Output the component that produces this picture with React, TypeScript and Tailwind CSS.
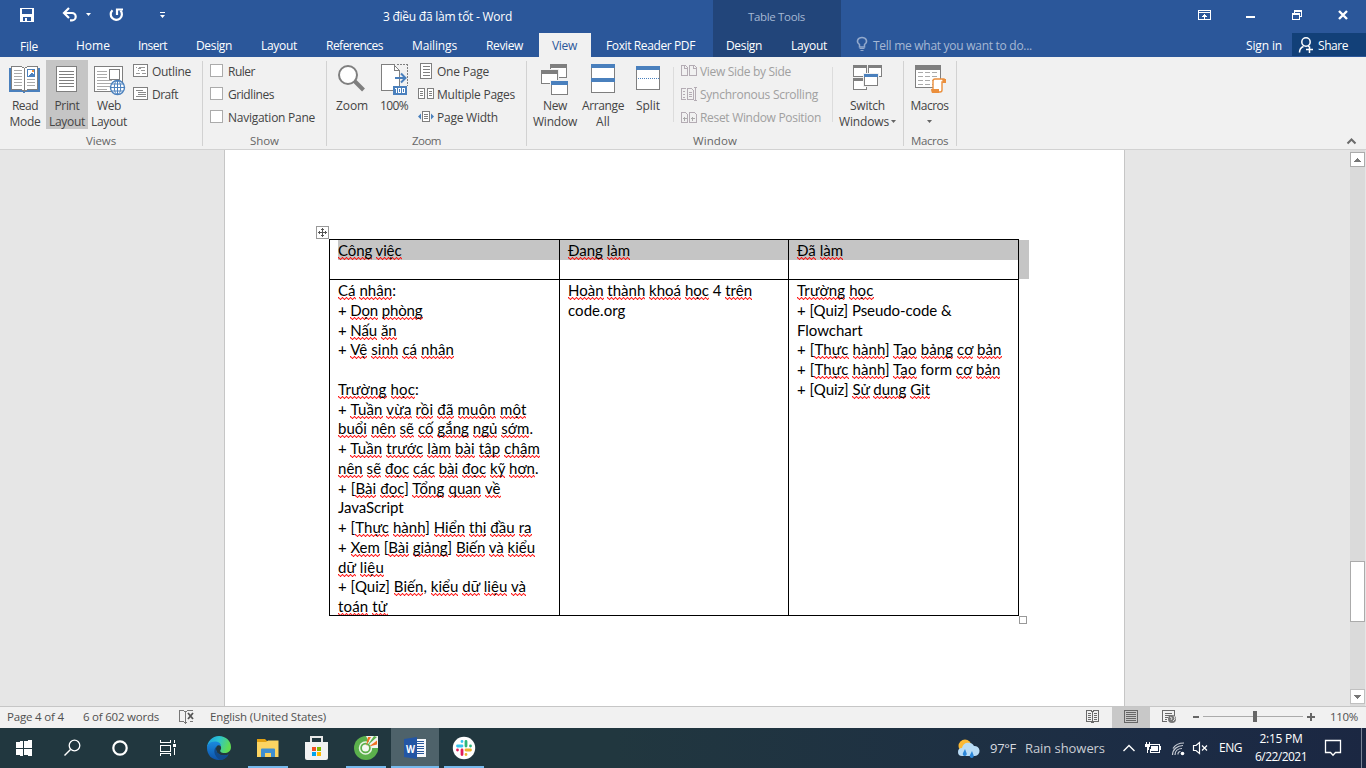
import { useLayoutEffect, useRef, type ReactNode } from "react";

/* Text that spreads its letters to fill its box exactly. */
function Fit({ w, className = "", children }: { w?: number; className?: string; children: ReactNode }) {
  const box = useRef<HTMLSpanElement>(null);
  const inner = useRef<HTMLSpanElement>(null);
  useLayoutEffect(() => {
    const b = box.current;
    const i = inner.current;
    if (!b || !i) return;
    const target = w ?? b.clientWidth;
    i.style.letterSpacing = "0px";
    const n = (i.textContent ?? "").length;
    const natural = i.getBoundingClientRect().width;
    if (n > 0 && target > 0) i.style.letterSpacing = `${(target - natural) / n}px`;
  });
  return (
    <span ref={box} className={`block shrink-0 whitespace-nowrap ${className}`}>
      <span ref={inner} className="inline-block">
        {children}
      </span>
    </span>
  );
}

/* SVG drawing whose coordinates are window coordinates. */
function Ico({ x, y, w, h, soft, className = "", children }: { x: number; y: number; w: number; h: number; soft?: boolean; className?: string; children: ReactNode }) {
  return (
    <svg width={w} height={h} viewBox={`${x} ${y} ${w} ${h}`} shapeRendering={soft ? "auto" : "crispEdges"} className={`block shrink-0 ${className}`} fill="none">
      {children}
    </svg>
  );
}

const G = "#7f7f7f";
const B = "#4a80bd";

/* ---------- Title bar and tabs ---------- */

function TitleBar() {
  return (
    <div className="flex h-[33px] shrink-0 text-white">
      <Ico x={0} y={0} w={180} h={33} soft>
        <path shapeRendering="crispEdges" fillRule="evenodd" fill="#fff" d="M20 8h14v14H20zM22 9v5h10V9zM23 17v4h2v-3h2v3h4v-4z" />
        <path d="M64 13h8a3.700 3.700 0 0 1 0 7.400H70" stroke="#fff" strokeWidth="2.200" />
        <path d="M69 8l-5 5 5 5" stroke="#fff" strokeWidth="2.200" />
        <path d="M86 13h5l-2.500 3z" fill="#fff" />
        <path d="M112.500 10.200a5.600 5.600 0 1 0 8 0.400" stroke="#fff" strokeWidth="2.200" />
        <path d="M117 15V9.500h6" stroke="#fff" strokeWidth="2.200" />
        <path d="M160 12h5v1h-5zM160 15h5l-2.500 3z" fill="#fff" />
      </Ico>
      <Fit className="ml-[203px] mt-px w-[129px] text-[12px] leading-[32px]">3 điều đã làm tốt - Word</Fit>
      <div className="ml-[201px] w-[128px] bg-[#22457a]">
        <Fit className="ml-[35px] mt-px w-[57px] text-[11.500px] leading-[32px] text-[#a6b8d4]">Table Tools</Fit>
      </div>
      <Ico x={1190} y={0} w={176} h={33} className="ml-auto">
        <path d="M1198.500 10.500h12v9h-12zM1198 12.500h13M1204.500 14v5M1202 16.500h5M1203 15.500h3" stroke="#fff" />
        <path d="M1246 16h9v2h-9z" fill="#fff" />
        <path d="M1292.500 13.500h7v6h-7zM1292 14.500h8M1294.500 13v-2.500h7v6h-2M1294 11.500h8" stroke="#fff" />
        <path d="M1339 11l8 8M1347 11l-8 8" stroke="#fff" strokeWidth="2.400" shapeRendering="auto" />
      </Ico>
    </div>
  );
}

function Tabs() {
  return (
    <div className="flex h-6 shrink-0 text-[12px] leading-[25px] text-white">
      <Fit className="ml-5 mt-px w-[18px]">File</Fit>
      <Fit className="ml-[38px] w-[34px]">Home</Fit>
      <Fit className="ml-[28px] w-[29px]">Insert</Fit>
      <Fit className="ml-[29px] w-[36px]">Design</Fit>
      <Fit className="ml-[29px] w-[36px]">Layout</Fit>
      <Fit className="ml-[29px] w-[57px]">References</Fit>
      <Fit className="ml-[29px] w-[45px]">Mailings</Fit>
      <Fit className="ml-[29px] w-[37px]">Review</Fit>
      <div className="ml-4 h-6 w-[52px] bg-[#f1f1f1] text-[#2b579a]">
        <Fit className="ml-[13px] w-[25px]">View</Fit>
      </div>
      <Fit className="ml-[15px] w-[89px]">Foxit Reader PDF</Fit>
      <div className="ml-[18px] flex h-6 w-[128px] bg-[#22457a]">
        <Fit className="ml-[13px] w-[36px]">Design</Fit>
        <Fit className="ml-[29px] w-[36px]">Layout</Fit>
      </div>
      <Ico x={855} y={33} w={14} h={24} soft className="ml-[14px]">
        <path d="M859.500 47v-2.500c-4-3-1.500-7 2.500-7s6.500 4 2.500 7V47z" stroke="#93a9cc" strokeWidth="1.500" />
        <path d="M859.500 48.500h5M860.500 50.500h3" stroke="#93a9cc" />
      </Ico>
      <Fit className="ml-[4px] w-[159px] text-[#a6b8d4]">Tell me what you want to do...</Fit>
      <Fit className="ml-[214px] w-[36px]">Sign in</Fit>
      <div className="ml-[10px] flex h-[23px] flex-1 bg-[#124078]">
        <Ico x={1297} y={33} w={19} h={23} soft className="ml-[5px]">
          <circle cx="1306" cy="42" r="4.200" stroke="#fff" strokeWidth="1.500" />
          <path d="M1299.500 52.500c0-3 1.500-5 4-6M1308 46l1.500 1M1309.500 46.500v6.500M1306 49.500h7" stroke="#fff" strokeWidth="1.500" />
        </Ico>
        <Fit className="ml-[2px] w-[30px]">Share</Fit>
      </div>
    </div>
  );
}

/* ---------- Ribbon ---------- */

function BigButton({ icon, className, children }: { icon: ReactNode; className: string; children: ReactNode }) {
  return (
    <div className={`flex h-[69px] shrink-0 flex-col items-center text-[12px] leading-4 ${className}`}>
      {icon}
      {children}
    </div>
  );
}

function Group({ label, labelClass, className, children }: { label: string; labelClass: string; className: string; children: ReactNode }) {
  return (
    <div className={`flex shrink-0 flex-col ${className}`}>
      <div className="mt-[3px] flex h-[73px]">{children}</div>
      <Fit className={`text-[11.500px] leading-4 text-[#666] ${labelClass}`}>{label}</Fit>
    </div>
  );
}

const Sep = () => <div className="my-1 h-[85px] w-px shrink-0 bg-[#d2d2d2]" />;
const InnerSep = () => <div className="mt-[7px] h-[55px] w-px shrink-0 bg-[#dcdcdc]" />;

const lines = (x1: number, x2: number, ys: number[]) => ys.map((y) => `M${x1} ${y}.5H${x2}`).join("");

function Ribbon() {
  return (
    <div className="flex h-[93px] shrink-0 border-b border-[#d2d2d2] bg-[#f1f1f1] text-[#444]">
      <Group label="Views" className="w-[202px]" labelClass="ml-[86px] w-[30px]">
        <BigButton
          className="ml-1 w-[42px]"
          icon={
            <Ico x={4} y={60} w={42} h={38}>
              <path d="M9 68h31v24H26l-2 1-2-1H9z" fill={B} />
              <path d="M11.500 66.500h10l3 2 3-2h10v23h-10l-3 2-3-2h-10z" fill="#fff" stroke={G} />
              <path d="M24.500 68v23" stroke={G} />
              <path d={lines(14, 22, [70, 73, 76, 79, 82, 85]) + lines(27, 35, [79, 82, 85])} stroke="#aaa" />
              <path d="M27 69h8v8h-8z" fill={B} />
              <path d="M28 70h6v4l-2-1-4 3z" fill="#fff" />
              <path d="M32 70h2v2h-2z" fill="#eb8f3c" />
            </Ico>
          }
        >
          <Fit className="w-[26px]">Read</Fit>
          <Fit className="w-[31px]">Mode</Fit>
        </BigButton>
        <BigButton
          className="w-[42px] bg-[#c5c5c5]"
          icon={
            <Ico x={46} y={60} w={42} h={38}>
              <path d="M56.500 66.500h20v25h-20z" fill="#fff" stroke={G} />
              <path d={lines(59, 74, [71, 74, 77, 80, 83, 86])} stroke={G} />
            </Ico>
          }
        >
          <Fit className="w-[25px]">Print</Fit>
          <Fit className="w-[36px]">Layout</Fit>
        </BigButton>
        <BigButton
          className="w-[42px]"
          icon={
            <Ico x={88} y={60} w={42} h={38}>
              <path d="M94.500 66.500h28v25h-28z" fill="#fff" stroke={G} />
              <path d={lines(97, 107, [71, 74, 77]) + lines(97, 112, [80, 83, 86]) + lines(97, 107, [89])} stroke="#aaa" />
              <path d="M109.500 69.500h10v10h-10z" fill="#fff" stroke={G} />
              <g shapeRendering="auto" stroke={B}>
                <circle cx="117.500" cy="87.500" r="7" fill="#fff" strokeWidth="1.400" />
                <ellipse cx="117.500" cy="87.500" rx="3.200" ry="7" />
                <path d="M110.500 87.500h14M117.500 80.500v14M112 84h11M112 91h11" />
              </g>
            </Ico>
          }
        >
          <Fit className="w-[24px]">Web</Fit>
          <Fit className="w-[36px]">Layout</Fit>
        </BigButton>
        <div className="ml-[3px] flex flex-col text-[12px]">
          <div className="flex h-[23px] items-center">
            <Ico x={133} y={60} w={16} h={23}>
              <path d="M133.500 64.500h14v12h-14z" fill="#fff" stroke={G} />
              <path d="M136 67.500h1M139 67.500h6M138 70.500h1M141 70.500h4M136 73.500h4M142 73.500h4M138 68.500h3" stroke="#999" />
            </Ico>
            <Fit className="ml-[3px] mt-px w-[39px]">Outline</Fit>
          </div>
          <div className="flex h-[23px] items-center">
            <Ico x={133} y={83} w={16} h={23}>
              <path d="M133.500 87.500h14v12h-14z" fill="#fff" stroke={G} />
              <path d="M136 90.500h7M138 92.500h8M138 94.500h8M136 96.500h10" stroke="#888" />
            </Ico>
            <Fit className="ml-[3px] mt-px w-[26px]">Draft</Fit>
          </div>
        </div>
      </Group>
      <Sep />
      <Group label="Show" className="w-[123px]" labelClass="ml-[47px] w-[29px]">
        <div className="ml-[7px] flex flex-col text-[12px]">
          {[
            ["Ruler", "w-[27px]"],
            ["Gridlines", "w-[46px]"],
            ["Navigation Pane", "w-[87px]"],
          ].map(([t, c]) => (
            <div key={t} className="flex h-[23px] items-center">
              <div className="mb-[2px] size-[13px] border border-[#ababab] bg-white" />
              <Fit className={`ml-[5px] mt-px ${c}`}>{t}</Fit>
            </div>
          ))}
        </div>
      </Group>
      <Sep />
      <Group label="Zoom" className="w-[199px]" labelClass="ml-[85px] w-[29px]">
        <BigButton
          className="ml-1 w-[42px]"
          icon={
            <Ico x={331} y={60} w={42} h={38} soft>
              <path d="M354 80.500l9.500 9.500" stroke={G} strokeWidth="4" />
              <circle cx="348" cy="75" r="9" fill="#fff" stroke={G} strokeWidth="2" />
            </Ico>
          }
        >
          <Fit className="w-[32px]">Zoom</Fit>
        </BigButton>
        <BigButton
          className="w-[42px]"
          icon={
            <Ico x={373} y={60} w={42} h={38}>
              <path d="M381.500 64.500h12l6 6v20h-18z" fill="#fff" stroke={G} />
              <path d="M394.500 64v6.500h5" stroke={G} />
              <path d="M397 64.500h10v21" stroke={G} strokeDasharray="2 1" />
              <path d="M393 86h14v9h-14z" fill={B} />
              <path d="M395 78h10" stroke={B} strokeWidth="2" />
              <path d="M401 73.500l4.500 4.500-4.500 4.500" stroke={B} strokeWidth="2" shapeRendering="auto" />
              <path d="M396.500 88v5M395 88.500h1M398.500 88.500h2v4h-2zM402.500 88.500h2v4h-2z" stroke="#fff" />
            </Ico>
          }
        >
          <Fit className="w-[28px]">100%</Fit>
        </BigButton>
        <div className="ml-[3px] flex flex-col text-[12px]">
          <div className="flex h-[23px] items-center">
            <Ico x={418} y={60} w={16} h={23}>
              <path d="M420.500 63.500h11v15h-11z" fill="#fff" stroke={G} />
              <path d={lines(423, 430, [66, 69, 72, 75])} stroke={G} />
            </Ico>
            <Fit className="ml-[3px] mt-px w-[52px]">One Page</Fit>
          </div>
          <div className="flex h-[23px] items-center">
            <Ico x={418} y={83} w={16} h={23}>
              <path d="M418.500 88.500h6v10h-6zM427.500 88.500h6v10h-6z" fill="#fff" stroke={G} />
              <path d={lines(420, 423, [91, 93, 95]) + lines(429, 432, [91, 93, 95])} stroke={G} />
            </Ico>
            <Fit className="ml-[3px] mt-px w-[78px]">Multiple Pages</Fit>
          </div>
          <div className="flex h-[23px] items-center">
            <Ico x={418} y={106} w={16} h={23}>
              <path d="M422.500 111.500h7v10h-7z" fill="#fff" stroke={G} />
              <path d={lines(424, 428, [114, 116, 118])} stroke={G} />
              <path d="M418 116.500l3-3v6zM434 116.500l-3-3v6z" fill={B} shapeRendering="auto" />
            </Ico>
            <Fit className="ml-[3px] mt-px w-[61px]">Page Width</Fit>
          </div>
        </div>
      </Group>
      <Sep />
      <Group label="Window" className="w-[376px]" labelClass="ml-[166px] w-[44px]">
        <BigButton
          className="ml-1 w-[48px]"
          icon={
            <Ico x={531} y={60} w={48} h={38}>
              <path d="M550.500 64.500h16v13h-16z" fill="#fff" stroke={G} />
              <path d="M550 64h17v4h-17z" fill={G} />
              <path d="M540 69h19v16h-19z" fill="#f1f1f1" />
              <path d="M541.500 70.500h16v13h-16z" fill="#fff" stroke={G} />
              <path d="M541 70h17v4h-17z" fill={G} />
              <path d="M550 80h19v16h-19z" fill="#f1f1f1" />
              <path d="M551.500 81.500h16v13h-16z" fill="#fff" stroke={G} />
              <path d="M551 81h17v4h-17z" fill={B} />
            </Ico>
          }
        >
          <Fit className="w-[24px]">New</Fit>
          <Fit className="w-[44px]">Window</Fit>
        </BigButton>
        <BigButton
          className="w-[48px]"
          icon={
            <Ico x={579} y={60} w={48} h={38}>
              <path d="M591.500 64.500h23v28h-23z" fill="#fff" stroke={G} />
              <path d="M591 64h24v4h-24zM591 78h24v4h-24z" fill={B} />
            </Ico>
          }
        >
          <Fit className="w-[42px]">Arrange</Fit>
          <Fit className="w-[14px]">All</Fit>
        </BigButton>
        <BigButton
          className="w-[42px]"
          icon={
            <Ico x={627} y={60} w={42} h={38}>
              <path d="M636.500 66.500h23v23h-23z" fill="#fff" stroke={G} />
              <path d="M636 66h24v4h-24z" fill={B} />
              <path d="M638 78.500h21" stroke={B} strokeDasharray="1 1" />
            </Ico>
          }
        >
          <Fit className="w-[24px]">Split</Fit>
        </BigButton>
        <div className="ml-1">
          <InnerSep />
        </div>
        <div className="ml-[7px] flex flex-col text-[12px] text-[#a0a0a0]">
          <div className="flex h-[23px] items-center">
            <Ico x={681} y={60} w={16} h={23}>
              <path d="M681.500 65.500h4l2 2v8h-6zM689.500 65.500h5l2 2v8h-7z" stroke="#b4acb4" />
              <path d="M684.500 65.500v3h3M693.500 65.500v3h3" stroke="#b4acb4" />
            </Ico>
            <Fit className="ml-[3px] mt-px w-[91px]">View Side by Side</Fit>
          </div>
          <div className="flex h-[23px] items-center">
            <Ico x={681} y={83} w={16} h={23}>
              <path d="M685.500 88.500h-4v11h4M687.500 88.500h4l2 2v9h-6zM694 87.500h3M695.500 87v14M694 100.500h3M683 91.500h2M683 94.500h2M683 97.500h2M689 92.500h3M689 94.500h3M689 96.500h3" stroke="#b4acb4" />
            </Ico>
            <Fit className="ml-[3px] mt-px w-[118px]">Synchronous Scrolling</Fit>
          </div>
          <div className="flex h-[23px] items-center">
            <Ico x={681} y={106} w={16} h={23}>
              <path d="M681.500 112.500h4l2 2v8h-6zM689.500 112.500h5l2 2v8h-7z" stroke="#b4acb4" />
              <path d="M683 118.500h4M684.500 116.500v4M691 118.500h4M692.500 116.500v4" stroke="#aaa" />
            </Ico>
            <Fit className="ml-[3px] mt-px w-[121px]">Reset Window Position</Fit>
          </div>
        </div>
        <div className="ml-[11px]">
          <InnerSep />
        </div>
        <BigButton
          className="ml-1 w-[61px]"
          icon={
            <Ico x={837} y={60} w={61} h={38}>
              <path d="M853.500 65.500h13v11h-13zM868.500 65.500h13v11h-13zM853.500 78.500h13v11h-13z" fill="#fff" stroke={G} />
              <path d="M853 65h14v3h-14zM868 65h14v3h-14zM853 78h14v3h-14z" fill={G} />
              <path d="M863 73h16v14h-16z" fill="#f1f1f1" />
              <path d="M864.500 74.500h13v11h-13z" fill="#fff" stroke={G} />
              <path d="M864 74h14v3h-14z" fill={B} />
            </Ico>
          }
        >
          <Fit className="w-[35px]">Switch</Fit>
          <div className="flex items-center pl-px">
            <Fit className="w-[50px]">Windows</Fit>
            <Ico x={0} y={0} w={8} h={4} soft>
              <path d="M2 0h5l-2.500 3z" fill="#666" />
            </Ico>
          </div>
        </BigButton>
      </Group>
      <Sep />
      <Group label="Macros" className="w-[52px]" labelClass="ml-[7px] w-[37px]">
        <BigButton
          className="w-[51px]"
          icon={
            <Ico x={904} y={60} w={51} h={38}>
              <path d="M915.500 65.500h25v22h-25z" fill="#fff" stroke={G} />
              <path d="M915 65h26v5h-26z" fill={G} />
              <path d={[72, 76, 80, 84].map((y) => `M918 ${y}.5h5M925 ${y}.5h5M932 ${y}.5h5`).join("")} stroke="#aaa" />
              <g shapeRendering="auto">
                <path d="M933 90V81a2 2 0 0 1 2-2h9v3h-2v8a2 2 0 0 1-2 2h-8" fill="#fff" stroke="#eb8f3c" strokeWidth="1.400" />
                <path d="M931 89h8v4h-7q-1-2-1-4zM942 79h4v4h-3z" fill="#eb8f3c" />
              </g>
            </Ico>
          }
        >
          <Fit className="w-[38px]">Macros</Fit>
          <Ico x={0} y={0} w={6} h={16} soft>
            <path d="M0 6h5l-2.500 3z" fill="#666" />
          </Ico>
        </BigButton>
      </Group>
      <Sep />
      <Ico x={1345} y={57} w={21} h={92} soft className="ml-auto">
        <path d="M1347.500 143.500l4-4 4 4" stroke="#6b6b6b" strokeWidth="2" />
      </Ico>
    </div>
  );
}

/* ---------- Document ---------- */

type Line = [string, number];

/* Words in braces carry the red spelling squiggle. */
function Rich({ line: [text, w] }: { line: Line }) {
  if (!text) return <div className="h-[19.780px]" />;
  return (
    <Fit w={w} className="h-[19.780px]">
      {text.split(/(\{[^}]*\})/).map((p, i) =>
        p.startsWith("{") ? (
          <span
            key={i}
            className="bg-[repeating-linear-gradient(90deg,#ff0000e6_0_1px,#ff000033_1px_2px,transparent_2px_3px,#ff000033_3px_4px),repeating-linear-gradient(90deg,#ff000066_0_1px,#ff0000cc_1px_2px,#ff000066_2px_3px,#ff0000cc_3px_4px),repeating-linear-gradient(90deg,transparent_0_1px,#ff000033_1px_2px,#ff0000e6_2px_3px,#ff000033_3px_4px)] bg-[length:100%_1px] bg-[position:0_calc(100%-2px),0_calc(100%-1px),0_100%] bg-no-repeat pb-px"
          >
            {p.slice(1, -1)}
          </span>
        ) : (
          <span key={i}>{p}</span>
        ),
      )}
    </Fit>
  );
}

const head: Line[] = [
  ["{Công} {việc}", 63.5],
  ["{Đang} {làm}", 62],
  ["{Đã} {làm}", 46],
];

const cells: Line[][] = [
  [
    ["{Cá} {nhân}:", 58],
    ["+ {Dọn} {phòng}", 84.5],
    ["+ {Nấu} {ăn}", 58.5],
    ["+ {Vệ} {sinh} {cá} {nhân}", 116],
    ["", 0],
    ["{Trường} {học}:", 81],
    ["+ {Tuần} {vừa} {rồi} {đã} {muộn} {một}", 188.5],
    ["{buổi} {nên} {sẽ} {cố} {gắng} {ngủ} {sớm}.", 195],
    ["+ {Tuần} {trước} {làm} {bài} {tập} {chậm}", 202],
    ["{nên} {sẽ} {đọc} {các} {bài} {đọc} {kỹ} {hơn}.", 200.5],
    ["+ [{Bài} {đọc}] {Tổng} {quan} {về}", 162.5],
    ["JavaScript", 65.5],
    ["+ [{Thực} {hành}] {Hiển} {thị} {đầu} {ra}", 193.5],
    ["+ {Xem} [{Bài} {giảng}] {Biến} {và} {kiểu}", 197],
    ["{dữ} {liệu}", 46],
    ["+ [Quiz] {Biến}, {kiểu} {dữ} {liệu} {và}", 188],
    ["{toán} {tử}", 49.5],
  ],
  [
    ["{Hoàn} {thành} {khoá} {học} 4 {trên}", 184],
    ["code.org", 57.5],
  ],
  [
    ["{Trường} {học}", 76.5],
    ["+ [Quiz] Pseudo-code &", 154.5],
    ["Flowchart", 65.5],
    ["+ [{Thực} {hành}] {Tạo} {bảng} {cơ} {bản}", 204.5],
    ["+ [{Thực} {hành}] {Tạo} form {cơ} {bản}", 203.5],
    ["+ [Quiz] {Sử} {dụng} {Git}", 133],
  ],
];

function Doc() {
  return (
    <div className="flex min-h-0 flex-1 bg-[#e6e6e6]">
      <div className="relative ml-[224px] w-[901px] border-x border-[#c6c6c6] bg-white pl-[104px] pt-[89px]">
        <Ico x={316} y={226} w={13} h={13} className="absolute left-[91px] top-[76px]">
          <path d="M316.500 226.500h12v12h-12z" fill="#fff" stroke="#999" />
          <path d="M322.500 228v9M318 232.500h9M321 229.500h3M321 235.500h3M319.500 231v3M325.500 231v3" stroke="#555" />
        </Ico>
        <div className="flex">
          <div className="grid w-[690px] grid-cols-[230px_229px_229px] grid-rows-[39px_335px] gap-y-px border border-black bg-black font-['Lato','Noto_Sans',sans-serif] text-[15px] leading-[20.600px] text-black">
            {head.map((l, i) => (
              <div key={l[0]} className={i < 2 ? "border-r border-black bg-white" : "bg-white"}>
                <div className={i === 0 ? "ml-2 h-5 bg-[#c5c5c5]" : "h-5 bg-[#c5c5c5] pl-2"}>
                  <Rich line={l} />
                </div>
              </div>
            ))}
            {cells.map((c, i) => (
              <div key={i} className={i < 2 ? "overflow-hidden border-r border-black bg-white pl-2" : "bg-white pl-2"}>
                {c.map((l, j) => (
                  <Rich key={j} line={l} />
                ))}
              </div>
            ))}
          </div>
          <div className="mt-px h-[39px] w-[10px] bg-[#c5c5c5]" />
        </div>
        <div className="ml-[690px] size-2 border border-[#999] bg-white" />
      </div>
      <div className="ml-auto mr-px flex w-[15px] flex-col bg-[#dadada] pb-[2px] pt-[2px]">
        <Ico x={0} y={0} w={15} h={15}>
          <path d="M.5.5h14v14h-14z" fill="#fff" stroke="#ababab" />
          <path d="M4 9h7v1H4zM5 8h5v1H5zM6 7h3v1H6zM7 6h1v1H7z" fill="#777" />
        </Ico>
        <div className="mt-[394px] h-[61px] border border-[#ababab] bg-white" />
        <Ico x={0} y={0} w={15} h={15} className="mt-auto">
          <path d="M.5.5h14v14h-14z" fill="#fff" stroke="#c0c0c0" />
          <path d="M4 6h7v1H4zM5 7h5v1H5zM6 8h3v1H6zM7 9h1v1H7z" fill="#777" />
        </Ico>
      </div>
    </div>
  );
}

/* ---------- Status bar ---------- */

function StatusBar() {
  return (
    <div className="flex h-[22px] shrink-0 border-t border-[#c6c6c6] bg-[#f1f1f1] text-[11.500px] leading-[19px] text-[#505050]">
      <Fit className="ml-[7px] w-[57px]">Page 4 of 4</Fit>
      <Fit className="ml-[19px] w-[76px]">6 of 602 words</Fit>
      <Ico x={178} y={707} w={16} h={21} className="ml-[19px]">
        <path d="M185.500 722v-10l-2-1.500h-4v11h4l2 1.500 2-1.500M185.500 712l2-1.500h2M190 721.500h3M192.500 710.500h-3" stroke="#777" />
        <path d="M188 713l5 6M193 713l-5 6" stroke="#555" strokeWidth="1.800" shapeRendering="auto" />
      </Ico>
      <Fit className="ml-[16px] w-[116px]">English (United States)</Fit>
      <Ico x={1086} y={707} w={14} h={21} className="ml-auto">
        <path d="M1086.500 710.500h4l2 1 2-1h4v11h-4l-2 1-2-1h-4zM1092.500 711v12" stroke="#6a6a6a" />
        <path d={lines(1088, 1091, [713, 715, 717, 719]) + lines(1094, 1097, [713, 715, 717, 719])} stroke="#6a6a6a" />
      </Ico>
      <div className="ml-3 w-[38px] bg-[#c8c8c8]">
        <Ico x={1112} y={707} w={38} h={21}>
          <path d="M1124.500 710.500h13v12h-13z" stroke="#666" />
          <path d={lines(1126, 1136, [712, 714, 716, 718, 720])} stroke="#666" />
        </Ico>
      </div>
      <Ico x={1150} y={707} w={176} h={21}>
        <path d="M1167 721.500h-4.500v-11h12v5M1165 713.500h7M1165 715.500h7M1165 717.500h3M1165 719.500h2" stroke="#6a6a6a" />
        <circle cx="1172" cy="719" r="4" fill="#777" shapeRendering="auto" />
        <path d="M1170 717l2 1-1 2M1174 716l1 3-2 2" stroke="#ddd" shapeRendering="auto" />
        <path d="M1193 716h6v2h-6zM1307 716h8v2h-8zM1310 713h2v8h-2z" fill="#666" />
        <path d="M1203 716.500h100" stroke="#ababab" />
        <path d="M1253 711h4v11h-4z" fill="#666" />
      </Ico>
      <Fit className="ml-[4px] mr-2 w-[28px]">110%</Fit>
    </div>
  );
}

/* ---------- Taskbar ---------- */

function TaskItem({ x, w = 48, active, open, className = "", children }: { x: number; w?: number; active?: boolean; open?: boolean; className?: string; children: ReactNode }) {
  return (
    <div className={`flex h-10 shrink-0 flex-col ${active ? "bg-[#4e626a]" : ""} ${className}`}>
      <Ico x={x} y={728} w={w} h={38} soft>
        {children}
      </Ico>
      <div className={`h-[2px] ${open ? "bg-[#76b9ed]" : ""} ${active ? "" : "mx-1"}`} />
    </div>
  );
}

function Taskbar() {
  return (
    <div className="flex h-10 shrink-0 bg-[linear-gradient(90deg,#21373f_0%,#21373f_45%,#1c2c45_85%,#1b2742_100%)] text-white">
      <TaskItem x={0}>
        <path shapeRendering="crispEdges" fill="#fff" d="M16 742l7-1v7h-7zM24 741l8-1v8h-8zM16 749h7v7l-7-1zM24 749h8v7l-8-1z" />
      </TaskItem>
      <TaskItem x={48}>
        <circle cx="74.500" cy="745.500" r="5.300" stroke="#fff" strokeWidth="1.300" />
        <path d="M70.500 749.500l-6 6" stroke="#fff" strokeWidth="1.400" />
      </TaskItem>
      <TaskItem x={96}>
        <circle cx="120" cy="748" r="6.700" stroke="#fff" strokeWidth="2.200" />
      </TaskItem>
      <TaskItem x={144}>
        <path shapeRendering="crispEdges" d="M160.500 740v2.500h10V740M160.500 745.500h10v6h-10zM160.500 756v-2.500h10v2.500M174.500 740v3M174.500 748v7" stroke="#fff" />
        <path shapeRendering="crispEdges" d="M173 744h3v3h-3z" fill="#fff" />
      </TaskItem>
      <TaskItem x={195} w={49} className="ml-[3px]">
        <defs>
          <linearGradient id="e1" x1="0" y1="0" x2="1" y2="0.300">
            <stop offset="0" stopColor="#1c9de0" />
            <stop offset="0.500" stopColor="#2bc3d2" />
            <stop offset="1" stopColor="#5fdc54" />
          </linearGradient>
          <linearGradient id="e2" x1="0" y1="0" x2="0" y2="1">
            <stop offset="0" stopColor="#1a8be0" />
            <stop offset="1" stopColor="#0d52a8" />
          </linearGradient>
        </defs>
        <path d="M207 748c0-6 5-12 12-12s12 5 12 11c0 4-3 6-6.500 6s-5-1.500-4-3c1.500-2 .5-6-4-6.500-5 0-9 2-9.500 4.500z" fill="url(#e1)" />
        <path d="M207 748c0-4 4-7 9-6.500 3 .3 5 2.500 5 4.500-3-2-5 0-5 3 0 5 6 8 12.500 5.500-3 4.500-7 5.500-9.500 5.500-7 0-12-5-12-12z" fill="url(#e2)" />
        <path d="M216 747c-3 3-2 9 4 13 3.500 0 7-2 8.500-5.500-6.500 2.500-12.500-.5-12.500-5.500z" fill="#114a8b" />
      </TaskItem>
      <TaskItem x={244} open>
        <path d="M257 739h8l2 2h11v15h-21z" fill="#e2a112" />
        <path d="M257 742h9l2-1.500h10.500V757H257z" fill="#fcd462" />
        <path d="M261 757v-7.500q0-1 1-1h12q1 0 1 1v7.500h-4v-4h-6v4z" fill="#3f8fd2" />
      </TaskItem>
      <TaskItem x={292} w={50}>
        <path d="M311 743v-6h11v6" stroke="#e8e8e8" strokeWidth="2" />
        <path d="M305 742h23v16q0 2-2 2h-19q-2 0-2-2z" fill="#f2f2f2" />
        <path fill="#f25022" d="M312 747h4v4h-4z" />
        <path fill="#7fba00" d="M317 747h4v4h-4z" />
        <path fill="#00a4ef" d="M312 752h4v4h-4z" />
        <path fill="#ffb900" d="M317 752h4v4h-4z" />
      </TaskItem>
      <TaskItem x={342} open>
        <circle cx="366" cy="748" r="12" fill="#5bb04c" />
        <path d="M366 736h12v12h-6z" fill="#f4f4f0" />
        <circle cx="365.500" cy="748" r="6" stroke="#e8f3e4" strokeWidth="1.500" />
        <circle cx="365.500" cy="748" r="3.500" fill="#f4f8f2" />
        <path d="M366 746l2-9h3z" fill="#f37021" />
        <path d="M367 746l7-10 3 1z" fill="#5bb04c" />
        <path d="M369 746.500l8-6v4z" fill="#f37021" />
        <path d="M372 748h6c0 2-.5 4-1 5z" fill="#5bb04c" />
      </TaskItem>
      <TaskItem x={391} active open className="ml-px">
        <path d="M414 739h12v18h-12z" fill="#f6f8fb" />
        <path shapeRendering="crispEdges" d={lines(417, 424, [741, 743, 746, 748, 751, 753])} stroke="#2b579a" />
        <path d="M404 739l13-2v22l-13-2z" fill="#2456a4" />
        <text x="406" y="752.500" fontSize="11" fontWeight="700" fill="#fff" fontFamily="Open Sans, sans-serif" textLength="9" lengthAdjust="spacingAndGlyphs">
          W
        </text>
      </TaskItem>
      <TaskItem x={440} open className="ml-px">
        <circle cx="464" cy="748" r="11.200" fill="#fff" />
        <g strokeWidth="2.800" strokeLinecap="round">
          <path d="M457.500 746h4.500M462 741.500v.1" stroke="#36c5f0" />
          <path d="M466 741.500v4.500M470.500 746v.1" stroke="#2eb67d" />
          <path d="M466 750h4.500M466 754.500v.1" stroke="#ecb22e" />
          <path d="M462 750v4.500M457.500 750v.1" stroke="#e01e5a" />
        </g>
      </TaskItem>
      <Ico x={956} y={728} w={26} h={40} soft className="ml-auto">
        <circle cx="965" cy="746" r="6.500" fill="#fbb935" />
        <path d="M962 756a4 4 0 0 1 0-8 6.500 6.500 0 0 1 12-2 5 5 0 0 1 1 10z" fill="#b9dcf6" />
        <path d="M965 749l-2 4a2 2 0 1 0 3.500 0zM972 751l-2 4a2 2 0 1 0 3.500 0z" fill="#2b86d9" />
      </Ico>
      <Fit className="ml-[8px] w-[26px] text-[13px] leading-[41px] text-[#d8dbe0]">97°F</Fit>
      <Fit className="ml-[9px] w-[80px] text-[13px] leading-[41px] text-[#c9cdd4]">Rain showers</Fit>
      <Ico x={1120} y={728} w={96} h={40} soft className="ml-[15px]">
        <path d="M1123.500 751l5.500-5.500 5.500 5.500" stroke="#fff" strokeWidth="1.400" />
        <g shapeRendering="crispEdges">
          <path d="M1149.500 744.500h10v8h-9v-4M1146.500 742v2M1149.500 742v2M1147.500 750v3" stroke="#fff" />
          <path d="M1151 746h7v5h-7zM1160 746h1v4h-1zM1145 744h5v3h-5zM1147 747h2v3h-2z" fill="#fff" />
        </g>
        <path d="M1180.500 751.500a2.500 2.500 0 0 0-2.500 3M1182 748.500c-4 0-7 2.500-7 6.500M1183 745.500c-6 0-10.500 4-10.500 9.500M1184 743c-5 0-9 2-11 5.500" stroke="#c8ccd4" strokeWidth="1.200" />
        <circle cx="1182.500" cy="753.500" r="1.800" fill="#fff" />
        <path d="M1193.500 745.500h2.500l3.500-3v11l-3.500-3h-2.500z" stroke="#fff" strokeWidth="1.200" />
        <path d="M1202 745.500l5 5M1207 745.500l-5 5" stroke="#fff" strokeWidth="1.200" />
      </Ico>
      <Fit className="ml-[3px] w-[23px] text-[12px] leading-[40px]">ENG</Fit>
      <div className="ml-[13px] flex w-[52px] flex-col items-center pt-[2px] text-[12px] leading-[18px]">
        <Fit className="w-[43px]">2:15 PM</Fit>
        <Fit className="w-[52px]">6/22/2021</Fit>
      </div>
      <Ico x={1307} y={728} w={59} h={40} soft>
        <path d="M1325.500 740.500h15v12h-5l-2.500 2.700-2.500-2.700h-5z" stroke="#fff" strokeWidth="1.300" />
        <path d="M1361.500 728v40" stroke="#7a8496" shapeRendering="crispEdges" />
      </Ico>
    </div>
  );
}

export default function App() {
  return (
    <div className="flex h-[768px] w-[1366px] flex-col overflow-hidden bg-[#2b579a] font-['Open_Sans','Noto_Sans',sans-serif]">
      <TitleBar />
      <Tabs />
      <Ribbon />
      <Doc />
      <StatusBar />
      <Taskbar />
    </div>
  );
}
